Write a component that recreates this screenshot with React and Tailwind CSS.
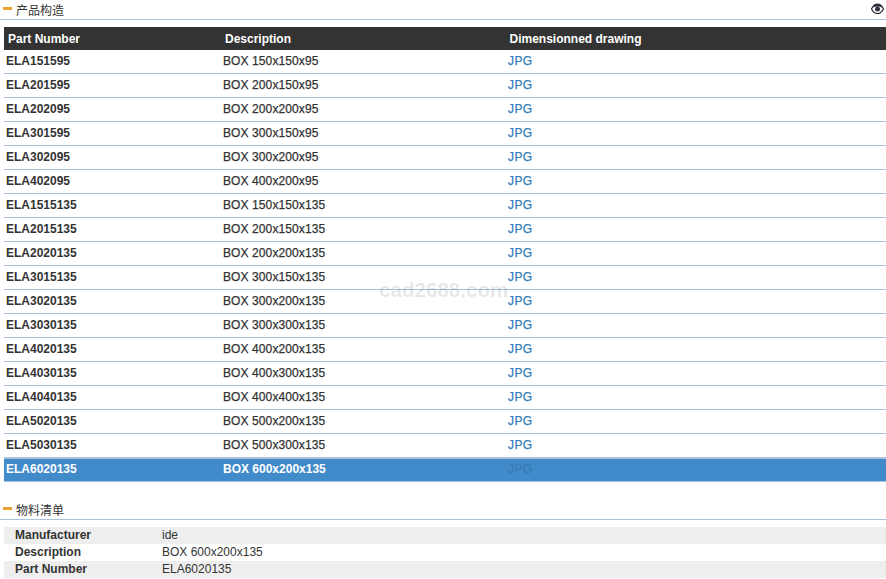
const rows = [
  ['ELA151595', 'BOX 150x150x95'],
  ['ELA201595', 'BOX 200x150x95'],
  ['ELA202095', 'BOX 200x200x95'],
  ['ELA301595', 'BOX 300x150x95'],
  ['ELA302095', 'BOX 300x200x95'],
  ['ELA402095', 'BOX 400x200x95'],
  ['ELA1515135', 'BOX 150x150x135'],
  ['ELA2015135', 'BOX 200x150x135'],
  ['ELA2020135', 'BOX 200x200x135'],
  ['ELA3015135', 'BOX 300x150x135'],
  ['ELA3020135', 'BOX 300x200x135'],
  ['ELA3030135', 'BOX 300x300x135'],
  ['ELA4020135', 'BOX 400x200x135'],
  ['ELA4030135', 'BOX 400x300x135'],
  ['ELA4040135', 'BOX 400x400x135'],
  ['ELA5020135', 'BOX 500x200x135'],
  ['ELA5030135', 'BOX 500x300x135'],
  ['ELA6020135', 'BOX 600x200x135'],
];

const details = [
  ['Manufacturer', 'ide'],
  ['Description', 'BOX 600x200x135'],
  ['Part Number', 'ELA6020135'],
];

function SectionTitle({ title, children }) {
  return (
    <div className="flex h-5 items-start border-b border-[#a9c1de] pl-[3px] pr-[2px]">
      <span className="mt-[7px] h-[3px] w-[9px] bg-[#f0a030]"></span>
      <span className="ml-[4px] mt-[3px] flex-1 text-[12px] leading-[16px] text-[#333]">{title}</span>
      {children}
    </div>
  );
}

function Eye() {
  return (
    <svg width="13" height="11" viewBox="0 0 13 11" className="mt-[3px]">
      <path d="M0.5 6C2 2.5 4 1 6.5 1S11 2.5 12.5 6C11 9 9 10.5 6.5 10.5S2 9 0.5 6Z" fill="#fff" stroke="#223" strokeWidth="1.2" />
      <path d="M1.5 5C3 2 4.5 1.2 6.5 1.2S10 2 11.5 5C10 4 8.5 3.6 6.5 3.6S3 4 1.5 5Z" fill="#223" />
      <circle cx="6.5" cy="6" r="2.5" fill="#334" />
    </svg>
  );
}

export default function App() {
  return (
    <div className="relative h-[579px] w-[886px] overflow-hidden bg-white font-['Liberation_Sans','Noto_Sans_CJK_SC',sans-serif] text-[12px] text-[#333]">
      <SectionTitle title="产品构造">
        <Eye />
      </SectionTitle>

      <div className="ml-1 mt-[7px]">
        <div className="flex h-[23px] items-center bg-[#333] font-bold text-white">
          <div className="w-[217px] pl-1">Part Number</div>
          <div className="w-[285px] pl-1">Description</div>
          <div className="flex-1 pl-[3.5px]">Dimensionned drawing</div>
        </div>
        {rows.map(([part, desc], i) => {
          const selected = i === rows.length - 1;
          return (
            <div
              key={part}
              className={
                selected
                  ? 'flex h-6 items-center border-y border-[#a9c1de] bg-[#428bca] pb-[3px] font-bold text-white'
                  : 'flex h-6 items-center border-b border-[#a9c1de] pb-[2px]'
              }
            >
              <div className={selected ? 'w-[217px] pl-[2px]' : 'w-[217px] pl-[2px] font-bold'}>{part}</div>
              <div className={selected ? 'w-[285px] pl-[2px]' : 'w-[285px] pl-[2px] tracking-[0.1px] [-webkit-text-stroke:0.25px_#333]'}>{desc}</div>
              <div className={selected ? 'flex-1 pl-[2px] font-normal tracking-[0.4px] text-[#337ab7] [-webkit-text-stroke:0.25px_#337ab7]' : 'flex-1 pl-[2px] tracking-[0.4px] text-[#337ab7] [-webkit-text-stroke:0.25px_#337ab7]'}>JPG</div>
            </div>
          );
        })}
      </div>

      <div className="mt-[18px]">
        <SectionTitle title="物料清单" />
      </div>

      <div className="ml-1 mt-[7px]">
        {details.map(([label, value], i) => (
          <div key={label} className={i % 2 === 0 ? 'flex h-[17px] items-center bg-[#eee] pb-[1px]' : 'flex h-[17px] items-center pb-[1px]'}>
            <div className="w-[158px] pl-[11px] font-bold">{label}</div>
            <div>{value}</div>
          </div>
        ))}
      </div>

      <div className="pointer-events-none absolute left-[379px] top-[278px] text-[20.6px] font-bold leading-6 text-black/10">cad2688.com</div>
    </div>
  );
}
